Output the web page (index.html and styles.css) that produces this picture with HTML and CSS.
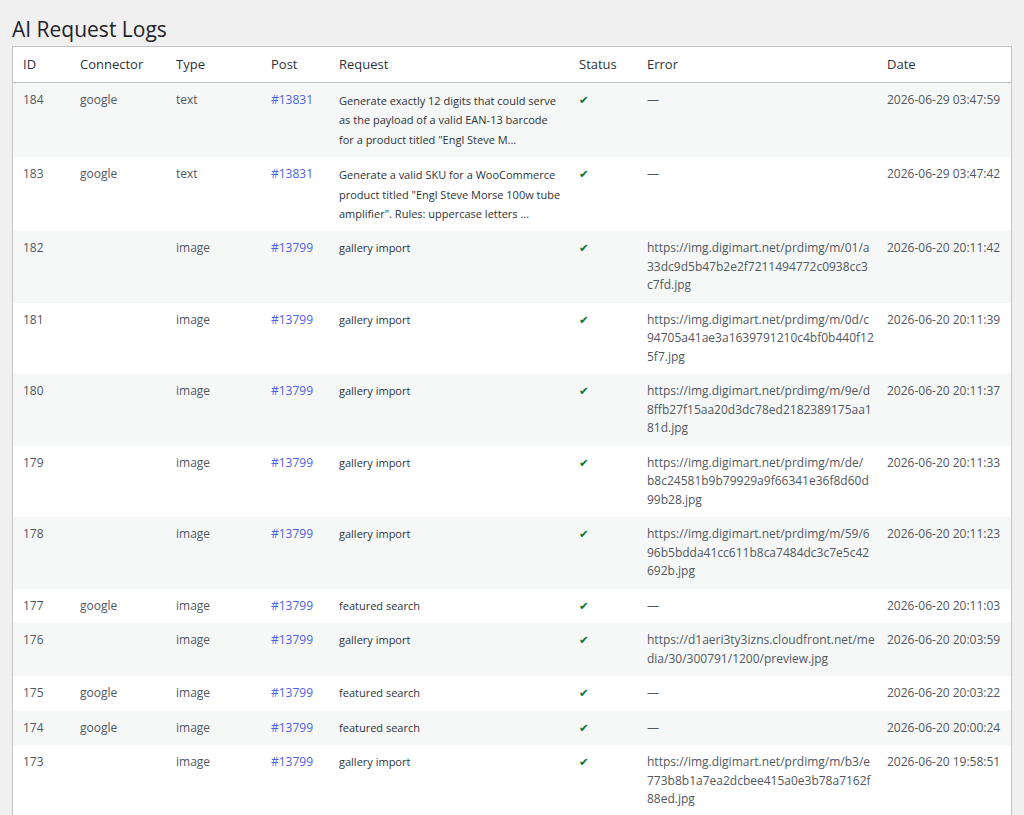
FILE: index.html
```html
<!DOCTYPE html>
<html lang="en">
<head>
<meta charset="utf-8">
<title>AI Request Logs</title>
<link rel="stylesheet" href="styles.css">
</head>
<body>
<div class="wrap">
  <h1 class="page-title">AI Request Logs</h1>
  <table class="logs">
    <colgroup>
      <col class="c-id"><col class="c-conn"><col class="c-type"><col class="c-post"><col class="c-req"><col class="c-status"><col class="c-err"><col class="c-date">
    </colgroup>
    <thead>
      <tr><th>ID</th><th>Connector</th><th>Type</th><th>Post</th><th>Request</th><th>Status</th><th>Error</th><th>Date</th></tr>
    </thead>
    <tbody>
      <tr>
        <td>184</td><td>google</td><td>text</td><td><a href="#">#13831</a></td>
        <td><span class="req">Generate exactly 12 digits that could serve<br>as the payload of a valid EAN-13 barcode<br>for a product titled "Engl Steve M...</span></td>
        <td><span class="ok">✔</span></td><td class="err">—</td><td class="date">2026-06-29 03:47:59</td>
      </tr>
      <tr>
        <td>183</td><td>google</td><td>text</td><td><a href="#">#13831</a></td>
        <td><span class="req">Generate a valid SKU for a WooCommerce<br>product titled "Engl Steve Morse 100w tube<br>amplifier". Rules: uppercase letters ...</span></td>
        <td><span class="ok">✔</span></td><td class="err">—</td><td class="date">2026-06-29 03:47:42</td>
      </tr>
      <tr>
        <td>182</td><td></td><td>image</td><td><a href="#">#13799</a></td>
        <td><span class="req">gallery import</span></td>
        <td><span class="ok">✔</span></td><td class="err">https://img.digimart.net/prdimg/m/01/a<br>33dc9d5b47b2e2f7211494772c0938cc3<br>c7fd.jpg</td><td class="date">2026-06-20 20:11:42</td>
      </tr>
      <tr>
        <td>181</td><td></td><td>image</td><td><a href="#">#13799</a></td>
        <td><span class="req">gallery import</span></td>
        <td><span class="ok">✔</span></td><td class="err">https://img.digimart.net/prdimg/m/0d/c<br>94705a41ae3a1639791210c4bf0b440f12<br>5f7.jpg</td><td class="date">2026-06-20 20:11:39</td>
      </tr>
      <tr>
        <td>180</td><td></td><td>image</td><td><a href="#">#13799</a></td>
        <td><span class="req">gallery import</span></td>
        <td><span class="ok">✔</span></td><td class="err">https://img.digimart.net/prdimg/m/9e/d<br>8ffb27f15aa20d3dc78ed2182389175aa1<br>81d.jpg</td><td class="date">2026-06-20 20:11:37</td>
      </tr>
      <tr>
        <td>179</td><td></td><td>image</td><td><a href="#">#13799</a></td>
        <td><span class="req">gallery import</span></td>
        <td><span class="ok">✔</span></td><td class="err">https://img.digimart.net/prdimg/m/de/<br>b8c24581b9b79929a9f66341e36f8d60d<br>99b28.jpg</td><td class="date">2026-06-20 20:11:33</td>
      </tr>
      <tr>
        <td>178</td><td></td><td>image</td><td><a href="#">#13799</a></td>
        <td><span class="req">gallery import</span></td>
        <td><span class="ok">✔</span></td><td class="err">https://img.digimart.net/prdimg/m/59/6<br>96b5bdda41cc611b8ca7484dc3c7e5c42<br>692b.jpg</td><td class="date">2026-06-20 20:11:23</td>
      </tr>
      <tr>
        <td>177</td><td>google</td><td>image</td><td><a href="#">#13799</a></td>
        <td><span class="req">featured search</span></td>
        <td><span class="ok">✔</span></td><td class="err">—</td><td class="date">2026-06-20 20:11:03</td>
      </tr>
      <tr>
        <td>176</td><td></td><td>image</td><td><a href="#">#13799</a></td>
        <td><span class="req">gallery import</span></td>
        <td><span class="ok">✔</span></td><td class="err">https://d1aeri3ty3izns.cloudfront.net/me<br>dia/30/300791/1200/preview.jpg</td><td class="date">2026-06-20 20:03:59</td>
      </tr>
      <tr>
        <td>175</td><td>google</td><td>image</td><td><a href="#">#13799</a></td>
        <td><span class="req">featured search</span></td>
        <td><span class="ok">✔</span></td><td class="err">—</td><td class="date">2026-06-20 20:03:22</td>
      </tr>
      <tr>
        <td>174</td><td>google</td><td>image</td><td><a href="#">#13799</a></td>
        <td><span class="req">featured search</span></td>
        <td><span class="ok">✔</span></td><td class="err">—</td><td class="date">2026-06-20 20:00:24</td>
      </tr>
      <tr>
        <td>173</td><td></td><td>image</td><td><a href="#">#13799</a></td>
        <td><span class="req">gallery import</span></td>
        <td><span class="ok">✔</span></td><td class="err">https://img.digimart.net/prdimg/m/b3/e<br>773b8b1a7ea2dcbee415a0e3b78a7162f<br>88ed.jpg</td><td class="date">2026-06-20 19:58:51</td>
      </tr>
    </tbody>
  </table>
</div>
</body>
</html>
```

FILE: styles.css
```css
html, body {
  margin: 0;
  padding: 0;
  background: #f0f0f1;
}
body {
  font-family: "Open Sans", "Noto Sans", sans-serif;
  color: #3c434a;
  font-size: 12px;
}
.wrap {
  margin: 0 12px;
}
.page-title {
  margin: 0;
  padding: 15px 0 3px;
  font-size: 21px;
  font-weight: 400;
  line-height: 28px;
  color: #1d2327;
}
.logs {
  width: 100%;
  table-layout: fixed;
  border-collapse: separate;
  border-spacing: 0;
  background: #fff;
  border: 1px solid #c3c4c7;
  box-shadow: 0 1px 1px rgba(0, 0, 0, 0.04);
}
.c-id { width: 57px; }
.c-conn { width: 96px; }
.c-type { width: 95px; }
.c-post { width: 68px; }
.c-req { width: 240px; }
.c-status { width: 68px; }
.c-err { width: 240px; }
.c-date { width: 134px; }

.logs th {
  text-align: left;
  font-weight: 400;
  font-size: 13px;
  line-height: 18px;
  padding: 8px 10px 9px;
  color: #2c3338;
  border-bottom: 1px solid #c3c4c7;
}
.logs td {
  vertical-align: top;
  padding: 8px 10px;
  font-size: 12px;
  line-height: 18.5px;
  color: #50575e;
}
.logs tbody tr:nth-child(odd) td {
  background: #f6f7f7;
}
.logs a {
  color: #4f5fe6;
  text-decoration: none;
}
.req {
  display: block;
  font-size: 11px;
  line-height: 18.5px;
  white-space: nowrap;
  color: #2c3338;
}
.logs tr:nth-child(-n+2) .req {
  line-height: 19.4px;
}
.ok {
  color: #06753a;
  font-family: "DejaVu Sans", sans-serif;
  font-size: 11.5px;
}
.err {
  font-size: 11.7px;
  white-space: nowrap;
}
.date {
  white-space: nowrap;
}
```
